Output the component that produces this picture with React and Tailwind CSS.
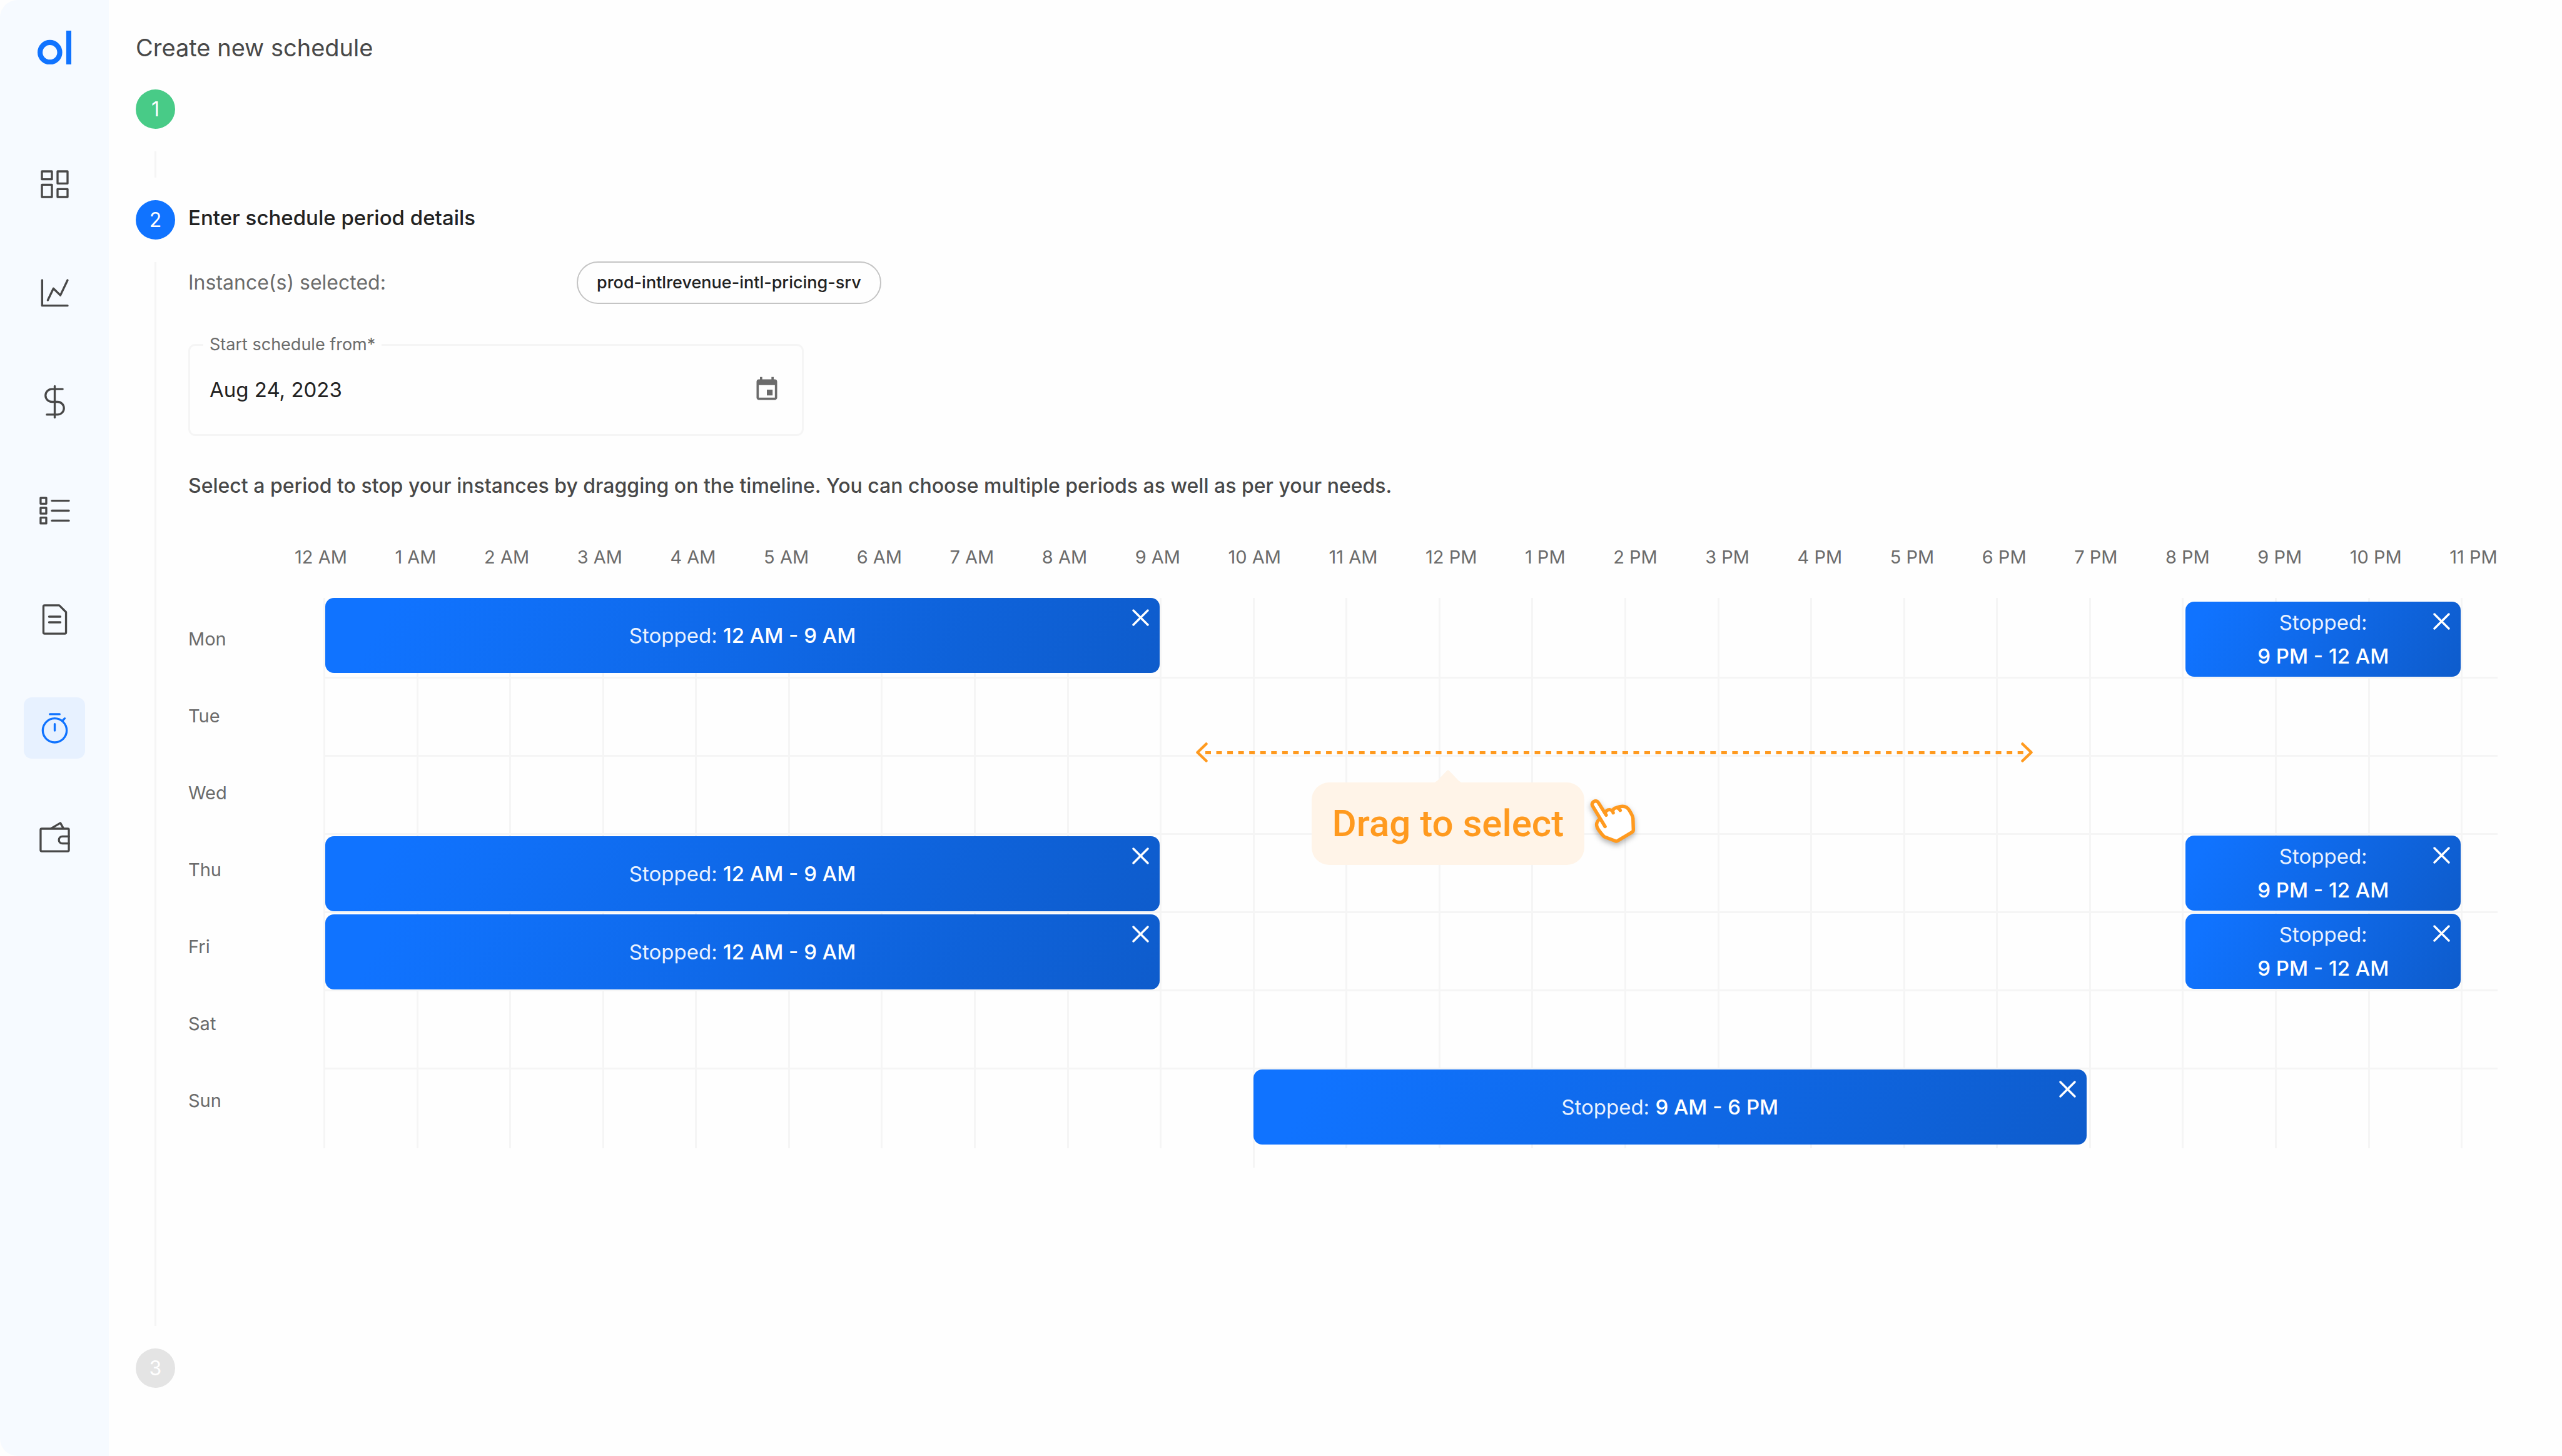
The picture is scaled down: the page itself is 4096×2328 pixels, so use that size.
import React from "react";

const HOURS = [
  "12 AM", "1 AM", "2 AM", "3 AM", "4 AM", "5 AM", "6 AM", "7 AM", "8 AM", "9 AM", "10 AM", "11 AM",
  "12 PM", "1 PM", "2 PM", "3 PM", "4 PM", "5 PM", "6 PM", "7 PM", "8 PM", "9 PM", "10 PM", "11 PM",
];

const night = { time: "12 AM - 9 AM", place: "col-start-1 col-end-10 ml-[3px] mt-0.5" };
const evening = { time: "9 PM - 12 AM", stacked: true, place: "col-start-21 col-end-24 ml-1.5 mt-px" };

const DAYS = [
  {
    name: "Mon",
    row: "h-[129px] border-b-3",
    periods: [
      { ...night, place: "col-start-1 col-end-10 ml-[3px]" },
      { ...evening, place: "col-start-21 col-end-24 ml-1.5 mt-1.5" },
    ],
  },
  { name: "Tue", row: "h-[125px] border-b-3", periods: [] },
  { name: "Wed", row: "h-[125px] border-b-3", periods: [] },
  { name: "Thu", row: "h-[125px] border-b-3", periods: [night, evening] },
  { name: "Fri", row: "h-[125px] border-b-3", periods: [night, evening] },
  { name: "Sat", row: "h-[125px] border-b-3", periods: [] },
  {
    name: "Sun",
    row: "h-[126px]",
    periods: [{ time: "9 AM - 6 PM", place: "col-start-11 col-end-20 ml-px mr-1" }],
  },
];

const NAV = [
  {
    label: "Dashboard",
    art: (
      <>
        <rect x="-22.7" y="-22.7" width="17.7" height="14" />
        <rect x="5" y="-22.7" width="17.7" height="21.4" />
        <rect x="-22.7" y="1" width="17.7" height="21.7" />
        <rect x="5" y="8.7" width="17.7" height="14" />
      </>
    ),
  },
  {
    label: "Analytics",
    art: (
      <>
        <path d="M-22.3 -22.7V22.3H22.7" />
        <path d="M-12.3 12.7L-2.3 -8L10 4L22.7 -22.7" />
      </>
    ),
  },
  {
    label: "Costs",
    art: (
      <>
        <path d="M0 -27.7V27.7" />
        <path d="M14 -22.6H-5A11.3 11.3 0 0 0 -5 0H5A11.3 11.3 0 0 1 5 22.6H-14" />
      </>
    ),
  },
  {
    label: "Resources",
    art: (
      <>
        <rect x="-25" y="-22.6" width="10" height="10.2" />
        <rect x="-25" y="-5" width="10" height="10.2" />
        <rect x="-25" y="12.4" width="10" height="10.2" />
        <path d="M-5 -17.6H25M-5 0H25M-5 17.6H25" />
      </>
    ),
  },
  {
    label: "Reports",
    art: (
      <>
        <path d="M-18 -25H8L20 -13V23Q20 25 18 25H-18Q-20 25 -20 23V-23Q-20 -25 -18 -25Z" />
        <path d="M-10 -5H10M-10 5H10" />
      </>
    ),
  },
  {
    label: "Schedules",
    active: true,
    art: (
      <>
        <path d="M-8.6 -25H8.6" />
        <circle cx="0" cy="3.7" r="21.2" />
        <path d="M0 -7.6V4M14.5 -14.2L17.7 -17.5" />
      </>
    ),
  },
  {
    label: "Billing",
    art: (
      <>
        <path d="M-23 -15H23Q25 -15 25 -13V23Q25 25 23 25H-23Q-25 25 -25 23V-13Q-25 -15 -23 -15Z" />
        <path d="M-6 -15.7L10 -25L15.3 -15.7" />
        <path d="M25 -1.3H13.7A6.3 6.3 0 0 0 13.7 11.3H25" />
      </>
    ),
  },
];

function Sidebar() {
  return (
    <aside className="flex w-[174px] shrink-0 flex-col items-center rounded-l-[28px] bg-[#f6faff] pt-[49px]">
      <a href="#home" aria-label="Home">
        <svg width="54" height="54" viewBox="0 0 60 60" className="text-[#1073ff]" aria-hidden="true">
          <circle cx="22" cy="38.5" r="17.5" fill="none" stroke="currentColor" strokeWidth="9" />
          <rect x="51" y="0" width="9" height="60" fill="currentColor" />
        </svg>
      </a>
      <nav className="mt-[142px] flex flex-col gap-[76px]">
        {NAV.map((item) => (
          <a
            key={item.label}
            href={"#" + item.label.toLowerCase()}
            aria-label={item.label}
            className={
              item.active
                ? "flex size-[98px] items-center justify-center rounded-[13px] bg-[#e7f1ff] text-[#1073ff]"
                : "flex size-[98px] items-center justify-center rounded-[13px] text-[#484848]"
            }
          >
            <svg
              width="65"
              height="65"
              viewBox="-36 -36 72 72"
              fill="none"
              stroke="currentColor"
              strokeWidth="3.7"
              strokeLinecap="round"
              strokeLinejoin="round"
              aria-hidden="true"
            >
              {item.art}
            </svg>
          </a>
        ))}
      </nav>
    </aside>
  );
}

function StepDot({ n, tone }) {
  return (
    <span className={"flex size-[63px] shrink-0 items-center justify-center rounded-full text-[32px] leading-10 text-white " + tone}>
      {n}
    </span>
  );
}

function Period({ period }) {
  return (
    <div
      className={
        "relative z-10 row-start-1 flex h-[120px] items-center justify-center rounded-[14px] bg-[linear-gradient(120deg,#1073ff_8%,#0e5ccc_100%)] text-center text-[33px] leading-[54px] text-white " +
        period.place
      }
    >
      <p>
        <span className="text-[#e8f1ff]">Stopped:</span>
        {period.stacked ? <br /> : " "}
        <span className="font-medium">{period.time}</span>
      </p>
      <button type="button" aria-label="Remove period" className="absolute top-[18px] right-[17px]">
        <svg width="27" height="27" viewBox="0 0 27 27" stroke="currentColor" strokeWidth="3.4" strokeLinecap="round" aria-hidden="true">
          <path d="M2 2L25 25M25 2L2 25" />
        </svg>
      </button>
    </div>
  );
}

function DragHint() {
  return (
    <div className="absolute top-[231px] left-[40.12%] z-20 w-[38.5%] text-[#ff9a1f]">
      <div className="flex h-8 items-center">
        <svg width="19" height="32" viewBox="0 0 19 32" fill="none" stroke="currentColor" strokeWidth="4.5" strokeLinecap="round" strokeLinejoin="round" aria-hidden="true">
          <path d="M16.5 2.5L2.5 16L16.5 29.5" />
        </svg>
        <svg className="-mx-1 h-[5px] min-w-0 flex-1" aria-hidden="true">
          <line x1="0" y1="2.5" x2="100%" y2="2.5" stroke="currentColor" strokeWidth="5" strokeDasharray="9 8.55" />
        </svg>
        <svg width="19" height="32" viewBox="0 0 19 32" fill="none" stroke="currentColor" strokeWidth="4.5" strokeLinecap="round" strokeLinejoin="round" aria-hidden="true">
          <path d="M2.5 2.5L16.5 16L2.5 29.5" />
        </svg>
      </div>
      <div className="mt-3 flex items-start pl-[185px]">
        <div className="flex flex-col items-center">
          <svg width="42" height="20" viewBox="0 0 42 20" fill="#fff4e8" aria-hidden="true">
            <path d="M0 20Q5 17 8 13L19 1.5Q21 -0.5 23 1.5L34 13Q37 17 42 20Z" />
          </svg>
          <p className="rounded-[28px] bg-[#fff4e8] px-[33px] py-6 font-['Roboto',sans-serif] text-[60px] leading-[84px] font-medium whitespace-nowrap">
            Drag to select
          </p>
        </div>
        <svg
          width="79"
          height="79"
          viewBox="60 80 260 260"
          className="mt-11 ml-1.5 overflow-visible drop-shadow-[0_4px_4px_rgba(0,0,0,0.3)]"
          fill="#fff"
          stroke="currentColor"
          strokeWidth="18"
          strokeLinecap="round"
          strokeLinejoin="round"
          aria-hidden="true"
        >
          <path d="M118 196C106 206 101 222 108 238C112 248 138 284 148 288L200 308Q208 312 215 308L291 263Q298 258 298 250L296 190C294 178 292 172 275 145C262 125 243 121 217 132L192 140L160 145L155 172L113 106C101 88 73 107 83 124Z" stroke="none" />
          <path
            fill="none"
            d="M149 233L83 124C73 107 101 88 113 106L155 173M150 162C156 140 187 138 192 161M190 150C194 134 218 126 229 148M212 133C243 121 262 125 275 145C292 172 295 178 296 190L298 250Q298 258 291 263L215 308Q208 312 200 308L148 288C138 284 112 248 108 238C101 222 106 206 118 196"
          />
        </svg>
      </div>
    </div>
  );
}

function Timeline() {
  return (
    <section aria-label="Weekly timeline">
      <ol className="mt-[66px] flex justify-between pl-[170px] text-[29px] leading-10 whitespace-nowrap text-[#6b6b6b]">
        {HOURS.map((hour) => (
          <li key={hour}>{hour}</li>
        ))}
      </ol>
      <div className="mt-[45px] flex">
        <ul className="flex w-[216px] shrink-0 flex-col gap-[83px] pt-[46px] text-[29px] leading-10 text-[#6b6b6b]">
          {DAYS.map((day) => (
            <li key={day.name}>{day.name}</li>
          ))}
        </ul>
        <div className="relative min-w-0 flex-1">
          {DAYS.map((day) => (
            <div
              key={day.name}
              className={
                "grid grid-cols-[repeat(23,minmax(0,164fr))_minmax(0,65fr)] items-start border-[#f5f5f5] " + day.row
              }
            >
              {HOURS.map((hour, i) => (
                <div
                  key={hour}
                  className={
                    day.name === "Sun" && hour === "10 AM"
                      ? "row-start-1 -mb-[31px] self-stretch border-l-3 border-[#f5f5f5]"
                      : "row-start-1 self-stretch border-l-3 border-[#f5f5f5]"
                  }
                  style={{ gridColumnStart: i + 1 }}
                />
              ))}
              {day.periods.map((period) => (
                <Period key={period.time} period={period} />
              ))}
            </div>
          ))}
          <DragHint />
        </div>
      </div>
    </section>
  );
}

export default function App() {
  return (
    <div className="flex min-h-screen bg-[#fefefe] font-['Inter',sans-serif]">
      <Sidebar />
      <main className="flex min-w-0 flex-1 flex-col pt-[48px] pr-[103px] pb-[109px] pl-[43px]">
        <h1 className="text-[38px] leading-[56px] text-[#484848]">Create new schedule</h1>

        <div className="mt-[39px] flex w-[63px] flex-col items-center">
          <StepDot n="1" tone="bg-[#48cb87]" />
          <span className="my-9 h-[42px] w-[3px] bg-[#f5f5f5]" />
        </div>

        <div className="flex flex-1 gap-[21px]">
          <div className="flex w-[63px] shrink-0 flex-col items-center">
            <StepDot n="2" tone="bg-[#1073ff]" />
            <span className="my-9 w-[3px] flex-1 bg-[#f5f5f5]" />
          </div>

          <div className="min-w-0 flex-1">
            <h2 className="text-[33px] leading-[56px] font-medium text-[#222222]">Enter schedule period details</h2>

            <div className="mt-[42px] flex items-center">
              <span className="w-[621px] text-[32px] leading-[56px] text-[#6b6b6b]">Instance(s) selected:</span>
              <span className="rounded-full border-2 border-[#c4c4c4] px-[30px] py-2.5 text-[27px] leading-11 font-medium text-[#222222]">
                prod-intlrevenue-intl-pricing-srv
              </span>
            </div>

            <fieldset className="mt-[45px] flex h-[166px] w-[984px] items-center rounded-[11px] border-3 border-[#f5f5f5] pr-[34px] pb-5">
              <legend className="ml-[21px] px-2.5 text-[27px] leading-10 text-[#6b6b6b]">
                <label htmlFor="start-date">Start schedule from*</label>
              </legend>
              <div className="flex w-full items-center">
                <input
                  id="start-date"
                  type="text"
                  defaultValue="Aug 24, 2023"
                  className="min-w-0 flex-1 bg-transparent pl-[31px] text-[33px] leading-[56px] text-[#222222] outline-none"
                />
                <button type="button" aria-label="Open calendar" className="text-[#6b6b6b]">
                  <svg width="44" height="44" viewBox="0 0 24 24" fill="currentColor" aria-hidden="true">
                    <path d="M17 12h-5v5h5v-5zM16 1v2H8V1H6v2H5c-1.11 0-1.99.9-1.99 2L3 19c0 1.1.89 2 2 2h14c1.1 0 2-.9 2-2V5c0-1.1-.9-2-2-2h-1V1h-2zm3 18H5V8h14v11z" />
                  </svg>
                </button>
              </div>
            </fieldset>

            <p className="mt-[52px] text-[32px] leading-[56px] font-medium text-[#484848]">
              Select a period to stop your instances by dragging on the timeline. You can choose multiple periods as well as per your needs.
            </p>

            <Timeline />
          </div>
        </div>

        <div className="flex w-[63px] flex-col items-center">
          <StepDot n="3" tone="bg-[#e4e4e4]" />
        </div>
      </main>
    </div>
  );
}
